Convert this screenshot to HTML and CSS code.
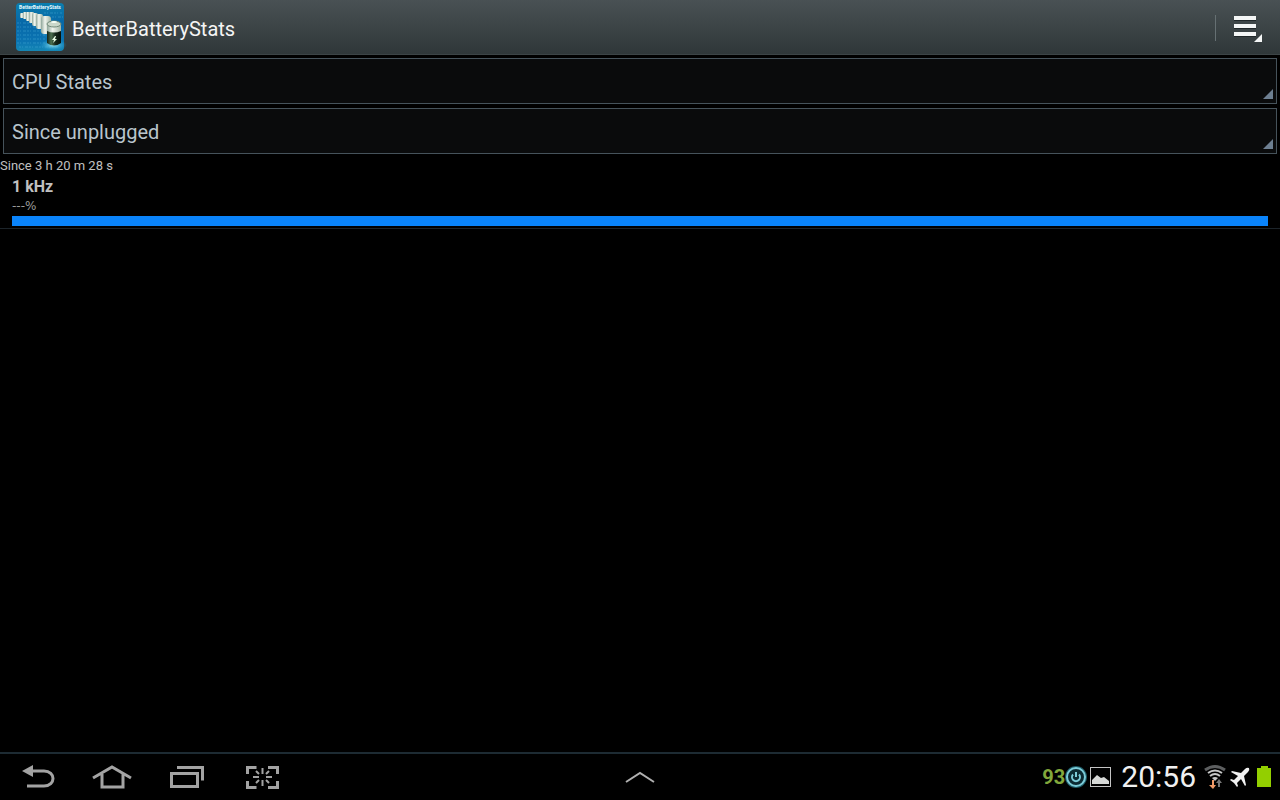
FILE: index.html
```html
<!DOCTYPE html>
<html lang="en">
<head>
    <meta charset="UTF-8">
    <meta name="viewport" content="width=device-width, initial-scale=1.0">
    <title>BetterBatteryStats</title>
    <link rel="stylesheet" href="styles.css">
</head>
<body>
    <header class="action-bar">
        <svg class="app-icon" viewBox="0 0 48 48" aria-hidden="true">
            <defs>
                <linearGradient id="sky" x1="0" y1="0" x2="0" y2="1">
                    <stop offset="0" stop-color="#0b7eae"/>
                    <stop offset="0.4" stop-color="#0768a8"/>
                    <stop offset="0.8" stop-color="#0b74b2"/>
                    <stop offset="1" stop-color="#1587b5"/>
                </linearGradient>
                <linearGradient id="cell" x1="0" y1="0" x2="1" y2="0">
                    <stop offset="0" stop-color="#13231a"/>
                    <stop offset="0.3" stop-color="#4c7050"/>
                    <stop offset="0.6" stop-color="#16281c"/>
                    <stop offset="1" stop-color="#07120c"/>
                </linearGradient>
                <linearGradient id="metal" x1="0" y1="0" x2="1" y2="0">
                    <stop offset="0" stop-color="#8fa69a"/>
                    <stop offset="0.4" stop-color="#f0f5ee"/>
                    <stop offset="1" stop-color="#a3b5a5"/>
                </linearGradient>
                <radialGradient id="glow">
                    <stop offset="0" stop-color="#9ee8f4"/>
                    <stop offset="1" stop-color="#1a9bd0" stop-opacity="0"/>
                </radialGradient>
            </defs>
            <rect width="48" height="48" rx="4" fill="url(#sky)"/>
            <g fill="none" stroke="#45a9d6" stroke-width="1" stroke-dasharray="2 1 1 2 3 1" opacity="0.5">
                <path d="M1 20h18M1 24h24M1 28h28M1 32h28M1 36h28M1 40h28M3 44h40M28 10h18M36 14h11"/>
            </g>
            <ellipse cx="37" cy="42" rx="14" ry="6" fill="url(#glow)"/>
            <ellipse cx="31" cy="24" rx="9" ry="12" fill="url(#glow)" opacity="0.7"/>
            <text class="icon-label" x="24" y="6" text-anchor="middle">BetterBatteryStats</text>
            <g fill="url(#metal)">
                <rect x="4" y="10" width="4" height="5" rx="1"/>
                <rect x="7" y="9" width="4" height="7" rx="1"/>
                <rect x="10" y="9" width="4" height="9" rx="1"/>
                <rect x="13" y="9" width="5" height="11" rx="1"/>
                <rect x="16" y="10" width="6" height="13" rx="2"/>
                <rect x="20" y="11" width="7" height="15" rx="2"/>
                <rect x="25" y="13" width="10" height="18" rx="3"/>
            </g>
            <path d="M31 21v19q7 5 14 0v-19z" fill="url(#cell)"/>
            <path d="M31 21v7q7 3 14 0v-7z" fill="url(#metal)"/>
            <ellipse cx="38" cy="21" rx="7" ry="3" fill="#cbd8ca" stroke="#718a79" stroke-width="1"/>
            <ellipse cx="38" cy="19" rx="3" ry="1" fill="#f8fff7"/>
            <path d="M39 33l-3 4h2l-1 3 4-4h-2l1-3z" fill="#e9ffe6"/>
        </svg>
        <h1 class="title">BetterBatteryStats</h1>
        <button class="menu-button" type="button" aria-label="Menu">
            <svg width="64" height="54" viewBox="0 0 64 54">
                <path d="M-1 15h1v26h-1z" fill="#667073"/>
                <path d="M18 17h22v4h-22zM18 25h22v4h-22zM18 33h22v4h-22z" fill="#202729"/>
                <path d="M18 16h22v4h-22zM18 24h22v4h-22zM18 32h22v4h-22zM46 34v8h-8z" fill="#f4f6f6"/>
            </svg>
        </button>
    </header>

    <main class="content">
        <div class="spinner">
            <select aria-label="Statistic">
                <option>CPU States</option>
            </select>
        </div>
        <div class="spinner">
            <select aria-label="Period">
                <option>Since unplugged</option>
            </select>
        </div>
        <p class="since">Since 3 h 20 m 28 s</p>
        <ul class="stats">
            <li class="stat">
                <h2 class="stat-name">1 kHz</h2>
                <p class="stat-value">---%</p>
                <div class="bar"></div>
            </li>
        </ul>
    </main>

    <footer class="system-bar">
        <nav class="nav-keys">
            <button type="button" aria-label="Back">
                <svg width="40" height="32" viewBox="0 0 40 32">
                    <path d="M13 10h13c12 0 12 15 0 15h-17" fill="none" stroke="#a3a3a3" stroke-width="3"/>
                    <path d="M4 10l11-6v12z" fill="#a3a3a3"/>
                </svg>
            </button>
            <button type="button" aria-label="Home">
                <svg width="40" height="32" viewBox="0 0 40 32">
                    <path d="M0 17l19-11 19 11M9 13v13h21v-13" fill="none" stroke="#a3a3a3" stroke-width="3"/>
                </svg>
            </button>
            <button type="button" aria-label="Recent apps">
                <svg width="40" height="32" viewBox="0 0 40 32">
                    <path d="M3.500 12.500h26v13h-26z" fill="none" stroke="#a3a3a3" stroke-width="3"/>
                    <path d="M9 6.500h25.500v13" fill="none" stroke="#a3a3a3" stroke-width="3"/>
                </svg>
            </button>
            <button type="button" aria-label="Screenshot">
                <svg width="40" height="32" viewBox="0 0 40 32">
                    <path d="M4.500 13v-6.500h9M25 6.500h9.500v6.500M34.500 20v6.500h-9.500M13.500 26.500h-9v-6.500" fill="none" stroke="#a3a3a3" stroke-width="3"/>
                    <path d="M19.500 7v6M19.500 19v6M10 16h6M23 16h6M13 10l3 3M26 10l-3 3M13 22l3-3M26 22l-3-3" fill="none" stroke="#a3a3a3" stroke-width="2"/>
                </svg>
            </button>
        </nav>
        <button class="mini-apps" type="button" aria-label="Mini apps">
            <svg width="32" height="16" viewBox="0 0 32 16">
                <path d="M2 13l14-9 14 9" fill="none" stroke="#b0b0b0" stroke-width="2"/>
            </svg>
        </button>
        <div class="status">
            <span class="level">93</span>
            <svg width="24" height="24" viewBox="0 0 24 24">
                <circle cx="11" cy="12" r="10" fill="none" stroke="#1d5964" stroke-width="2"/>
                <circle cx="11" cy="12" r="9" fill="#0c2a32" stroke="#7ccbd8" stroke-width="2"/>
                <path d="M8 9.500a4 4 0 1 0 6 0M11 7v5" fill="none" stroke="#7ccbd8" stroke-width="2"/>
            </svg>
            <svg width="24" height="24" viewBox="0 0 24 24">
                <rect x="1.500" y="2.500" width="20" height="19" fill="none" stroke="#c4c4c4" stroke-width="1"/>
                <path d="M3 19v-4l5-5 4 3 3-1 5 4v3z" fill="#d6d8d6"/>
            </svg>
            <time class="clock">20:56</time>
            <svg width="24" height="28" viewBox="0 0 24 28">
                <path d="M1 7q10-7 20 0" fill="none" stroke="#5d5f60" stroke-width="3"/>
                <path d="M4 10q7-5 14 0M6 13q5-4 10 0" fill="none" stroke="#c7c8c8" stroke-width="2"/>
                <path d="M8 15q3-2 6 0l-3 3z" fill="#c7c8c8"/>
                <path d="M8 17h2v5h2l-3 4-4-4h3z" fill="#f09a67"/>
                <path d="M14 24v-4h-2l3-4 3 4h-2v4z" fill="#777"/>
            </svg>
            <svg width="24" height="24" viewBox="0 0 24 24">
                <path d="M21 3q-2-1-4 1l-4 4-9-2-1 1 7 4-4 4-3-1-1 1 4 3 3 4 1-1-1-3 4-4 4 7 1-1-2-9 4-4q2-2 1-4z" fill="#f1f1f1"/>
            </svg>
            <svg width="24" height="24" viewBox="0 0 24 24">
                <path d="M9 1h7v2h3v19h-14v-19h4z" fill="#93cf00"/>
            </svg>
        </div>
    </footer>
</body>
</html>
```
FILE: styles.css
```css
* {
    box-sizing: border-box;
}
body {
    margin: 0;
    min-height: 100vh;
    display: flex;
    flex-direction: column;
    background-color: #000;
    color: #c0c0c0;
    font-family: Roboto, "Noto Sans", sans-serif;
}
h1, h2, p, ul {
    margin: 0;
    padding: 0;
}
button {
    padding: 0;
    border: 0;
    background: none;
    cursor: pointer;
}
svg {
    display: block;
    overflow: visible;
}

/* top bar */
.action-bar {
    display: flex;
    align-items: center;
    height: 55px;
    padding-left: 16px;
    background-image: linear-gradient(#495154, #2f3739);
    border-bottom: 1px solid #3c4446;
}
.app-icon {
    width: 48px;
    height: 48px;
    margin-right: 8px;
}
.icon-label {
    font-size: 5px;
    font-weight: bold;
    fill: #e9fbff;
}
.title {
    flex: 1;
    padding-top: 4px;
    font-size: 20px;
    font-weight: normal;
    line-height: 24px;
    color: #f5f5f5;
}

/* drop-downs and list */
.content {
    flex: 1;
    padding-top: 3px;
}
.spinner {
    position: relative;
    margin: 0 3px 4px;
}
.spinner select {
    display: block;
    width: 100%;
    height: 46px;
    padding: 2px 8px 0;
    appearance: none;
    border: 1px solid #46535b;
    border-radius: 0;
    background-color: #0a0b0c;
    color: #b9c5cc;
    font-family: inherit;
    font-size: 20px;
}
.spinner::after {
    content: "";
    position: absolute;
    right: 4px;
    bottom: 5px;
    width: 10px;
    height: 10px;
    background-color: #6d7f91;
    clip-path: polygon(100% 0, 100% 100%, 0 100%);
    pointer-events: none;
}
.since {
    font-size: 13px;
    line-height: 16px;
}
.stats {
    list-style: none;
}
.stat {
    padding: 3px 12px 2px;
    border-bottom: 1px solid #1c242a;
}
.stat-name {
    font-size: 16px;
    font-weight: bold;
    line-height: 20px;
}
.stat-value {
    font-family: "DejaVu Sans", Roboto, sans-serif;
    font-size: 12px;
    line-height: 19px;
    color: #9a9a9a;
}
.bar {
    height: 10px;
    background-color: #0a84fb;
}

/* bottom bar */
.system-bar {
    display: grid;
    grid-template-columns: 1fr auto 1fr;
    align-items: center;
    height: 48px;
    border-top: 2px solid #1d2b33;
}
.nav-keys {
    display: flex;
    gap: 35px;
    padding-left: 18px;
}
.status {
    display: flex;
    align-items: center;
    justify-content: flex-end;
    padding-right: 4px;
}
.level {
    font-size: 20px;
    font-weight: bold;
    color: #82a83c;
}
.clock {
    margin: 0 8px;
    font-size: 30px;
    line-height: 46px;
    color: #f0f0f0;
}
```
